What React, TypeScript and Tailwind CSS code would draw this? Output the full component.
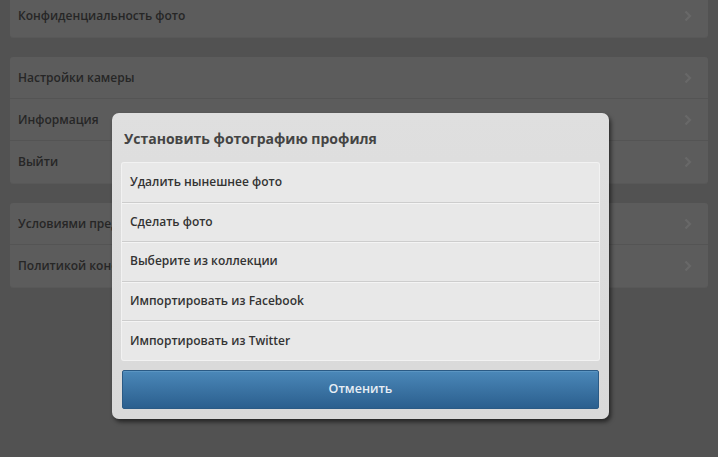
const font = { fontFamily: '"Open Sans", "DejaVu Sans", sans-serif' };

type Row = { label: string; clip?: boolean };

const groups: Row[][] = [
  [{ label: 'Конфиденциальность фото' }],
  [{ label: 'Настройки камеры' }, { label: 'Информация' }, { label: 'Выйти' }],
  [
    { label: 'Условиями предоставления услуг', clip: true },
    { label: 'Политикой конфиденциальности', clip: true },
  ],
];

const options = [
  'Удалить нынешнее фото',
  'Сделать фото',
  'Выберите из коллекции',
  'Импортировать из Facebook',
  'Импортировать из Twitter',
];

function Chevron() {
  return (
    <svg width="8" height="12" viewBox="0 0 8 12" className="shrink-0">
      <path d="M1.5 1.5 L6 6 L1.5 10.5" fill="none" stroke="#686868" strokeWidth="2.2" />
    </svg>
  );
}

export default function App() {
  return (
    <div
      className="relative h-[457px] w-[718px] overflow-hidden bg-[#525252]"
      style={font}
    >
      <div className="-mt-[5px] flex flex-col gap-[20px] px-[10px]">
        {groups.map((group, gi) => (
          <div
            key={gi}
            className="flex flex-col rounded-[3px] bg-[#5c5c5c] shadow-[0_1px_0_#585858]"
          >
            {group.map((row, ri) => (
              <div
                key={row.label}
                className={`flex h-[42px] items-center justify-between pl-[8px] pr-[16px] ${
                  ri < group.length - 1 ? 'border-b border-[#545454]' : ''
                } ${gi === 0 ? 'h-[41px]' : ''}`}
              >
                <span
                  className={`text-[12px] font-semibold text-[#262626] ${
                    row.clip ? 'max-w-[94px] overflow-hidden whitespace-nowrap' : ''
                  }`}
                >
                  {row.label}
                </span>
                <Chevron />
              </div>
            ))}
          </div>
        ))}
      </div>

      <div className="absolute left-[112px] top-[113px] flex w-[497px] flex-col rounded-[7px] bg-gradient-to-b from-[#dfdfdf] to-[#d9d9d9] px-[10px] pb-[10px] shadow-[2px_3px_4px_rgba(0,0,0,0.55)]">
        <div className="flex h-[50px] items-center pl-[2px]">
          <span className="text-[14px] font-bold text-[#444444]">
            Установить фотографию профиля
          </span>
        </div>
        <div className="flex h-[197px] flex-col overflow-hidden rounded-[2px] bg-[#e8e8e8] shadow-[0_0_0_1px_#f2f2f2]">
          {options.map((o, i) => (
            <div
              key={o}
              className={`flex flex-1 items-center px-[8px] ${
                i < options.length - 1 ? 'border-b border-[#cdcdcd] shadow-[0_1px_0_#f4f4f4]' : ''
              }`}
            >
              <span className="text-[12px] font-semibold text-[#333333]">{o}</span>
            </div>
          ))}
        </div>
        <button className="mt-[10px] flex h-[39px] items-center justify-center rounded-[2px] border border-[#2a5a85] bg-gradient-to-b from-[#4b88b9] to-[#2b5f8e] shadow-[inset_0_1px_0_#5b95c2]">
          <span className="text-[12.5px] font-semibold text-[#e8eef5]">Отменить</span>
        </button>
      </div>
    </div>
  );
}
